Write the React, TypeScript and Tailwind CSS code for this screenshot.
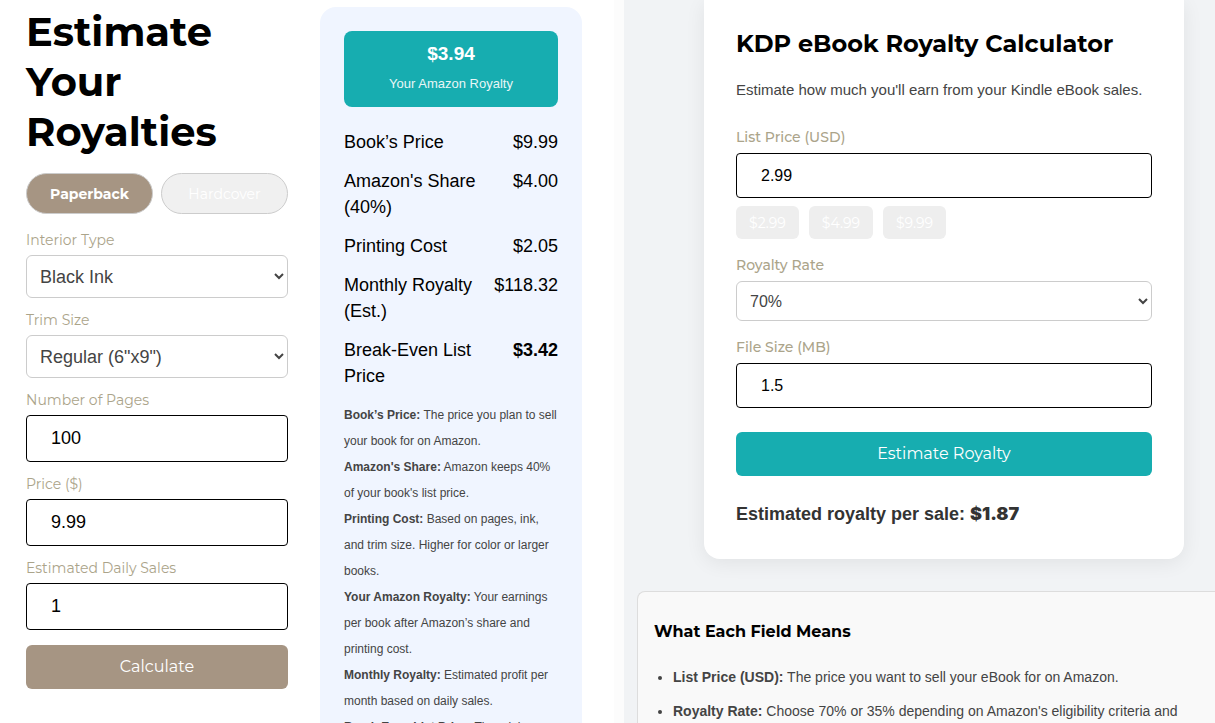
import { useState } from 'react';
import type { ReactNode } from 'react';

interface FieldProps {
  id: string;
  label: string;
  labelClassName: string;
  children: ReactNode;
}

const RESULTS = [
  { label: 'Book’s Price', value: '$9.99' },
  { label: "Amazon's Share (40%)", value: '$4.00' },
  { label: 'Printing Cost', value: '$2.05' },
  { label: 'Monthly Royalty (Est.)', value: '$118.32' },
  { label: 'Break-Even List Price', value: '$3.42', bold: true },
];

const NOTES = [
  { term: 'Book’s Price:', text: 'The price you plan to sell your book for on Amazon.' },
  { term: "Amazon's Share:", text: "Amazon keeps 40% of your book's list price." },
  { term: 'Printing Cost:', text: 'Based on pages, ink, and trim size. Higher for color or larger books.' },
  { term: 'Your Amazon Royalty:', text: 'Your earnings per book after Amazon’s share and printing cost.' },
  { term: 'Monthly Royalty:', text: 'Estimated profit per month based on daily sales.' },
  { term: 'Break-Even List Price:', text: 'The minimum price to cover your costs.' },
];

const PRICES = ['2.99', '4.99', '9.99'];

const printInput = 'block h-[47px] w-full rounded border border-black bg-white px-6 text-lg text-black';
const printSelect = 'block h-[43px] w-full rounded-md border border-[#cccccc] bg-white px-[9px] text-lg text-[#444444]';
const ebookInput = 'block h-[45px] w-full rounded border border-black bg-white px-6 text-base text-black';

function Field({ id, label, labelClassName, children }: FieldProps) {
  return (
    <div>
      <label htmlFor={id} className={`mb-1 block font-[Montserrat,Inter,sans-serif] text-[#aba48a] ${labelClassName}`}>
        {label}
      </label>
      {children}
    </div>
  );
}

function PrintForm() {
  const [cover, setCover] = useState('Paperback');

  return (
    <form className="min-w-0" onSubmit={(e) => e.preventDefault()}>
      <h1 className="mb-4 font-[Montserrat,Inter,sans-serif] text-[40px] leading-[50px] font-bold text-black">
        Estimate Your Royalties
      </h1>

      <div className="mb-4 flex gap-2">
        {['Paperback', 'Hardcover'].map((name) => (
          <button
            key={name}
            type="button"
            onClick={() => setCover(name)}
            className={`h-[41px] flex-1 rounded-full border border-[#cccccc] font-[Montserrat,Inter,sans-serif] text-sm text-white ${
              cover === name ? 'bg-[#a69583] font-bold' : 'bg-[#f0f0f0]'
            }`}
          >
            {name}
          </button>
        ))}
      </div>

      <div className="mb-[15px] flex flex-col gap-3">
        <Field id="ink" label="Interior Type" labelClassName="text-sm leading-[21px]">
          <select id="ink" className={printSelect}>
            <option>Black Ink</option>
            <option>Color Ink</option>
          </select>
        </Field>
        <Field id="trim" label="Trim Size" labelClassName="text-sm leading-[21px]">
          <select id="trim" className={printSelect}>
            <option>Regular (6"x9")</option>
            <option>Large</option>
          </select>
        </Field>
        <Field id="pages" label="Number of Pages" labelClassName="text-sm leading-[21px]">
          <input id="pages" defaultValue="100" className={printInput} />
        </Field>
        <Field id="price" label="Price ($)" labelClassName="text-sm leading-[21px]">
          <input id="price" defaultValue="9.99" className={printInput} />
        </Field>
        <Field id="sales" label="Estimated Daily Sales" labelClassName="text-sm leading-[21px]">
          <input id="sales" defaultValue="1" className={printInput} />
        </Field>
      </div>

      <button className="h-11 w-full rounded-md bg-[#a69583] font-[Montserrat,Inter,sans-serif] text-base text-white">
        Calculate
      </button>
    </form>
  );
}

function PrintResults() {
  return (
    <div className="min-w-0 rounded-2xl bg-[#f0f5ff] p-6">
      <div className="mb-[22px] flex flex-col gap-1 rounded-lg bg-[#17adb0] py-[10px] text-center text-white">
        <strong className="text-[19px] leading-[26px]">$3.94</strong>
        <span className="text-[13px] leading-[26px] opacity-90">Your Amazon Royalty</span>
      </div>

      <dl className="mb-[13px] flex flex-col gap-[13px] text-lg leading-[26px] text-black">
        {RESULTS.map((row) => (
          <div key={row.label} className="flex justify-between gap-2">
            <dt>{row.label}</dt>
            <dd className={row.bold ? 'font-bold' : ''}>{row.value}</dd>
          </div>
        ))}
      </dl>

      <div className="text-xs leading-[26px] text-[#444444]">
        {NOTES.map((note) => (
          <p key={note.term}>
            <strong>{note.term}</strong> {note.text}
          </p>
        ))}
      </div>
    </div>
  );
}

function EbookCalculator() {
  const [price, setPrice] = useState('2.99');

  return (
    <form
      className="mr-[31px] ml-20 rounded-b-2xl bg-white px-8 pt-7 pb-8 shadow-[0_4px_20px_rgba(0,0,0,0.07)]"
      onSubmit={(e) => e.preventDefault()}
    >
      <h2 className="mb-4 font-[Montserrat,Inter,sans-serif] text-2xl leading-8 font-bold text-black">
        KDP eBook Royalty Calculator
      </h2>
      <p className="mb-[21px] text-[15px] leading-7 text-[#444444]">
        Estimate how much you'll earn from your Kindle eBook sales.
      </p>

      <div className="flex flex-col gap-[14px]">
        <Field id="list-price" label="List Price (USD)" labelClassName="text-sm leading-6 font-medium">
          <input
            id="list-price"
            value={price}
            onChange={(e) => setPrice(e.target.value)}
            className={ebookInput}
          />
          <div className="mt-2 flex gap-[10px]">
            {PRICES.map((p) => (
              <button
                key={p}
                type="button"
                onClick={() => setPrice(p)}
                className="h-[33px] rounded-md bg-[#eeeeee] px-[13px] font-[Montserrat,Inter,sans-serif] text-sm text-white"
              >
                ${p}
              </button>
            ))}
          </div>
        </Field>
        <Field id="rate" label="Royalty Rate" labelClassName="text-sm leading-6 font-medium">
          <select
            id="rate"
            className="block h-10 w-full rounded-md border border-[#cccccc] bg-white px-[9px] text-base text-[#444444]"
          >
            <option>70%</option>
            <option>35%</option>
          </select>
        </Field>
        <Field id="file-size" label="File Size (MB)" labelClassName="text-sm leading-6 font-medium">
          <input id="file-size" defaultValue="1.5" className={ebookInput} />
        </Field>
      </div>

      <button className="mt-6 h-11 w-full rounded-md bg-[#17adb0] font-[Montserrat,Inter,sans-serif] text-base text-white">
        Estimate Royalty
      </button>
      <p className="mt-[25px] text-lg leading-[26px] font-bold text-[#333333]">
        Estimated royalty per sale: <span className="font-['Arial_Black',Inter,sans-serif] font-black">$1.87</span>
      </p>
    </form>
  );
}

function FieldGuide() {
  return (
    <section className="mt-8 ml-[13px] rounded-tl-lg border-t border-l border-[#dddddd] bg-[#f9f9f9] px-4 pt-7 pb-6">
      <h3 className="mb-5 font-[Montserrat,Inter,sans-serif] text-base leading-6 font-bold text-black">
        What Each Field Means
      </h3>
      <ul className="flex list-disc flex-col gap-2 pl-[19px] text-sm leading-[26px] text-[#444444]">
        <li>
          <strong>List Price (USD):</strong> The price you want to sell your eBook for on Amazon.
        </li>
        <li>
          <strong>Royalty Rate:</strong> Choose 70% or 35% depending on Amazon's eligibility criteria and pricing.
        </li>
      </ul>
    </section>
  );
}

export default function App() {
  return (
    <main className="grid h-screen grid-cols-[624fr_591fr] overflow-hidden bg-white font-['Liberation_Sans',Arial,sans-serif]">
      <div className="min-w-0 border-r-[10px] border-[#fcfcfc]">
        <div className="grid grid-cols-2 gap-8 pt-[7px] pr-8 pl-[26px]">
          <PrintForm />
          <PrintResults />
        </div>
      </div>
      <div className="min-w-0 bg-[#f1f3f5]">
        <EbookCalculator />
        <FieldGuide />
      </div>
    </main>
  );
}
